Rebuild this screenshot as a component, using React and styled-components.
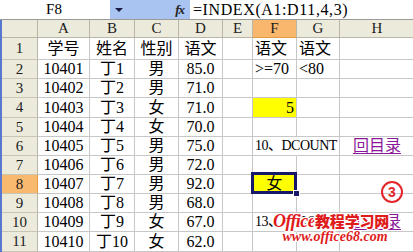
import React from "react";
import styled, { createGlobalStyle } from "styled-components";

const Global = createGlobalStyle`
  html, body { margin: 0; padding: 0; background: #fff; }
  body { width: 413px; height: 252px; overflow: hidden; }
`;

const Root = styled.div`
  position: relative;
  width: 413px;
  height: 252px;
  overflow: hidden;
  font-family: "Liberation Serif", "Noto Sans CJK SC", serif;
  color: #000;
`;

const FormulaBar = styled.div`
  display: flex;
  height: 20px;
  box-sizing: border-box;
  border-bottom: 1px solid #9a9a9a;
  background: #fff;
`;

const NameBox = styled.div`
  width: 110px;
  display: flex;
  align-items: center;
  justify-content: center;
  font-size: 15px;
  padding-right: 2px;
  box-sizing: border-box;
`;

const BarTools = styled.div`
  width: 80px;
  background: #a9c4f0;
  display: flex;
  align-items: center;
  justify-content: space-between;
  padding: 0 6px 0 4px;
  box-sizing: border-box;
`;

const Arrow = styled.span`
  width: 0;
  height: 0;
  border-left: 4px solid transparent;
  border-right: 4px solid transparent;
  border-top: 4px solid #1a1a40;
  margin-left: 1px;
`;

const Fx = styled.span`
  font-style: italic;
  font-weight: bold;
  font-size: 13px;
  letter-spacing: -1px;
  color: #222;
`;

const FormulaInput = styled.div`
  flex: 1;
  display: flex;
  align-items: center;
  padding-left: 3px;
  font-size: 16px;
  letter-spacing: 0.6px;
  white-space: nowrap;
`;

const Sheet = styled.div`
  display: grid;
  grid-template-columns: 36px 52px 45px 44px 44px 30px 44px 43px 75px;
  grid-template-rows: 18px 22px 19px 19px 20px 19px 19px 19px 19px 19px 19px 20px;
  border-left: 2px solid #5878d0;
`;

const HeadBase = styled.div`
  box-sizing: border-box;
  display: flex;
  align-items: center;
  justify-content: center;
  font-size: 15px;
  color: #1d1d1d;
  border-right: 1px solid #b9b6a8;
  border-bottom: 1px solid #b9b6a8;
`;

const Corner = styled(HeadBase)`
  background: #ebeadb;
`;

const ColHeader = styled(HeadBase)`
  background: ${(p) => (p.$active ? "#f8b76d" : "#ebeadb")};
  border-bottom-color: ${(p) => (p.$active ? "#e29a47" : "#b9b6a8")};
`;

const RowHeader = styled(HeadBase)`
  background: ${(p) => (p.$active ? "#f9b96f" : "#ebeadb")};
  border-right-color: ${(p) => (p.$active ? "#e29a47" : "#b9b6a8")};
  border-bottom-color: #c9c6b8;
`;

const Cell = styled.div`
  position: relative;
  box-sizing: border-box;
  display: flex;
  align-items: center;
  justify-content: ${(p) =>
    p.$align === "right" ? "flex-end" : p.$align === "left" ? "flex-start" : "center"};
  padding: 0 2px;
  font-size: ${(p) => (p.$compact ? "14px" : "16px")};
  letter-spacing: ${(p) => (p.$compact ? "-0.5px" : "normal")};
  line-height: 1;
  white-space: nowrap;
  overflow: visible;
  background: ${(p) => (p.$fill ? p.$fill : "#fff")};
  border-right: 1px solid ${(p) => (p.$noRight ? "transparent" : "#c7c7c7")};
  border-bottom: 1px solid #c7c7c7;
  z-index: ${(p) => (p.$over ? 2 : 0)};
`;

const Selection = styled.div`
  position: absolute;
  left: -2px;
  top: -3px;
  right: -1px;
  bottom: -1px;
  border: 3px solid #16186a;
  pointer-events: none;
`;

const Handle = styled.div`
  position: absolute;
  right: -6px;
  bottom: -6px;
  width: 5px;
  height: 5px;
  background: #16186a;
  border: 1px solid #fff;
`;

const Link = styled.span`
  color: #8a1a9a;
  text-decoration: underline;
  text-underline-offset: 2px;
`;

const Circled = styled.div`
  position: absolute;
  z-index: 5;
  left: 381px;
  top: 181px;
  width: 22px;
  height: 22px;
  box-sizing: border-box;
  border: 2.5px solid #e4262b;
  border-radius: 50%;
  display: flex;
  align-items: center;
  justify-content: center;
  color: #e4262b;
  font-family: "Liberation Sans", sans-serif;
  font-weight: bold;
  font-size: 14px;
`;

const Watermark = styled.div`
  position: absolute;
  z-index: 5;
  left: 273px;
  top: 210px;
  display: flex;
  flex-direction: column;
  align-items: center;
  color: #e01b1b;
  text-shadow: 1px 0 0 #fff, -1px 0 0 #fff, 0 1px 0 #fff, 0 -1px 0 #fff,
    1px 1px 0 #fff, -1px -1px 0 #fff, 1px -1px 0 #fff, -1px 1px 0 #fff,
    2px 0 0 #fff, -2px 0 0 #fff;
`;

const MarkTitle = styled.div`
  display: flex;
  align-items: baseline;
  white-space: nowrap;
`;

const MarkLatin = styled.span`
  font-family: "Liberation Serif", serif;
  font-style: italic;
  font-weight: bold;
  font-size: 18px;
  letter-spacing: -0.6px;
`;

const MarkCjk = styled.span`
  font-family: "Noto Sans CJK SC", sans-serif;
  font-weight: 900;
  font-size: 15px;
  letter-spacing: -0.2px;
`;

const MarkUrl = styled.div`
  font-family: "Liberation Serif", serif;
  font-style: italic;
  font-weight: bold;
  font-size: 14px;
  margin-top: -3px;
  margin-left: 8px;
  white-space: nowrap;
`;

const cols = ["A", "B", "C", "D", "E", "F", "G", "H"];

const data = [
  ["学号", "姓名", "性别", "语文"],
  ["10401", "丁1", "男", "85.0"],
  ["10402", "丁2", "男", "71.0"],
  ["10403", "丁3", "女", "71.0"],
  ["10404", "丁4", "女", "70.0"],
  ["10405", "丁5", "男", "75.0"],
  ["10406", "丁6", "男", "72.0"],
  ["10407", "丁7", "男", "92.0"],
  ["10408", "丁8", "男", "68.0"],
  ["10409", "丁9", "女", "67.0"],
  ["10410", "丁10", "女", "62.0"],
];

const extra = {
  1: { F: "语文", G: "语文" },
  2: { F: ">=70", G: "<80" },
  6: { F: "10、DCOUNT", H: "link", spill: true },
  10: { F: "13、DPRODUCT", H: "link", spill: true },
};

export default function App() {
  return (
    <Root>
      <Global />
      <FormulaBar>
        <NameBox>F8</NameBox>
        <BarTools>
          <Arrow />
          <Fx>fx</Fx>
        </BarTools>
        <FormulaInput>=INDEX(A1:D11,4,3)</FormulaInput>
      </FormulaBar>
      <Sheet>
        <Corner />
        {cols.map((c) => (
          <ColHeader key={c} $active={c === "F"}>
            {c}
          </ColHeader>
        ))}
        {data.map((row, i) => {
          const r = i + 1;
          const ex = extra[r] || {};
          const isF4 = r === 4;
          const isF8 = r === 8;
          return (
            <React.Fragment key={r}>
              <RowHeader $active={r === 8}>{r}</RowHeader>
              {row.map((v, j) => (
                <Cell key={j}>{v}</Cell>
              ))}
              <Cell />
              {isF4 ? (
                <Cell $fill="#ffff00" $align="right">5</Cell>
              ) : isF8 ? (
                <Cell $fill="#ffff00" $over>
                  女
                  <Selection>
                    <Handle />
                  </Selection>
                </Cell>
              ) : (
                <Cell
                  $align="left"
                  $noRight={ex.spill}
                  $over={ex.spill}
                  $compact={ex.spill}
                >
                  {ex.F}
                </Cell>
              )}
              <Cell $align="left">{ex.G}</Cell>
              <Cell>{ex.H === "link" ? <Link>回目录</Link> : null}</Cell>
            </React.Fragment>
          );
        })}
      </Sheet>
      <Circled>3</Circled>
      <Watermark>
        <MarkTitle>
          <MarkLatin>Office</MarkLatin>
          <MarkCjk>教程学习网</MarkCjk>
        </MarkTitle>
        <MarkUrl>www.office68.com</MarkUrl>
      </Watermark>
    </Root>
  );
}
